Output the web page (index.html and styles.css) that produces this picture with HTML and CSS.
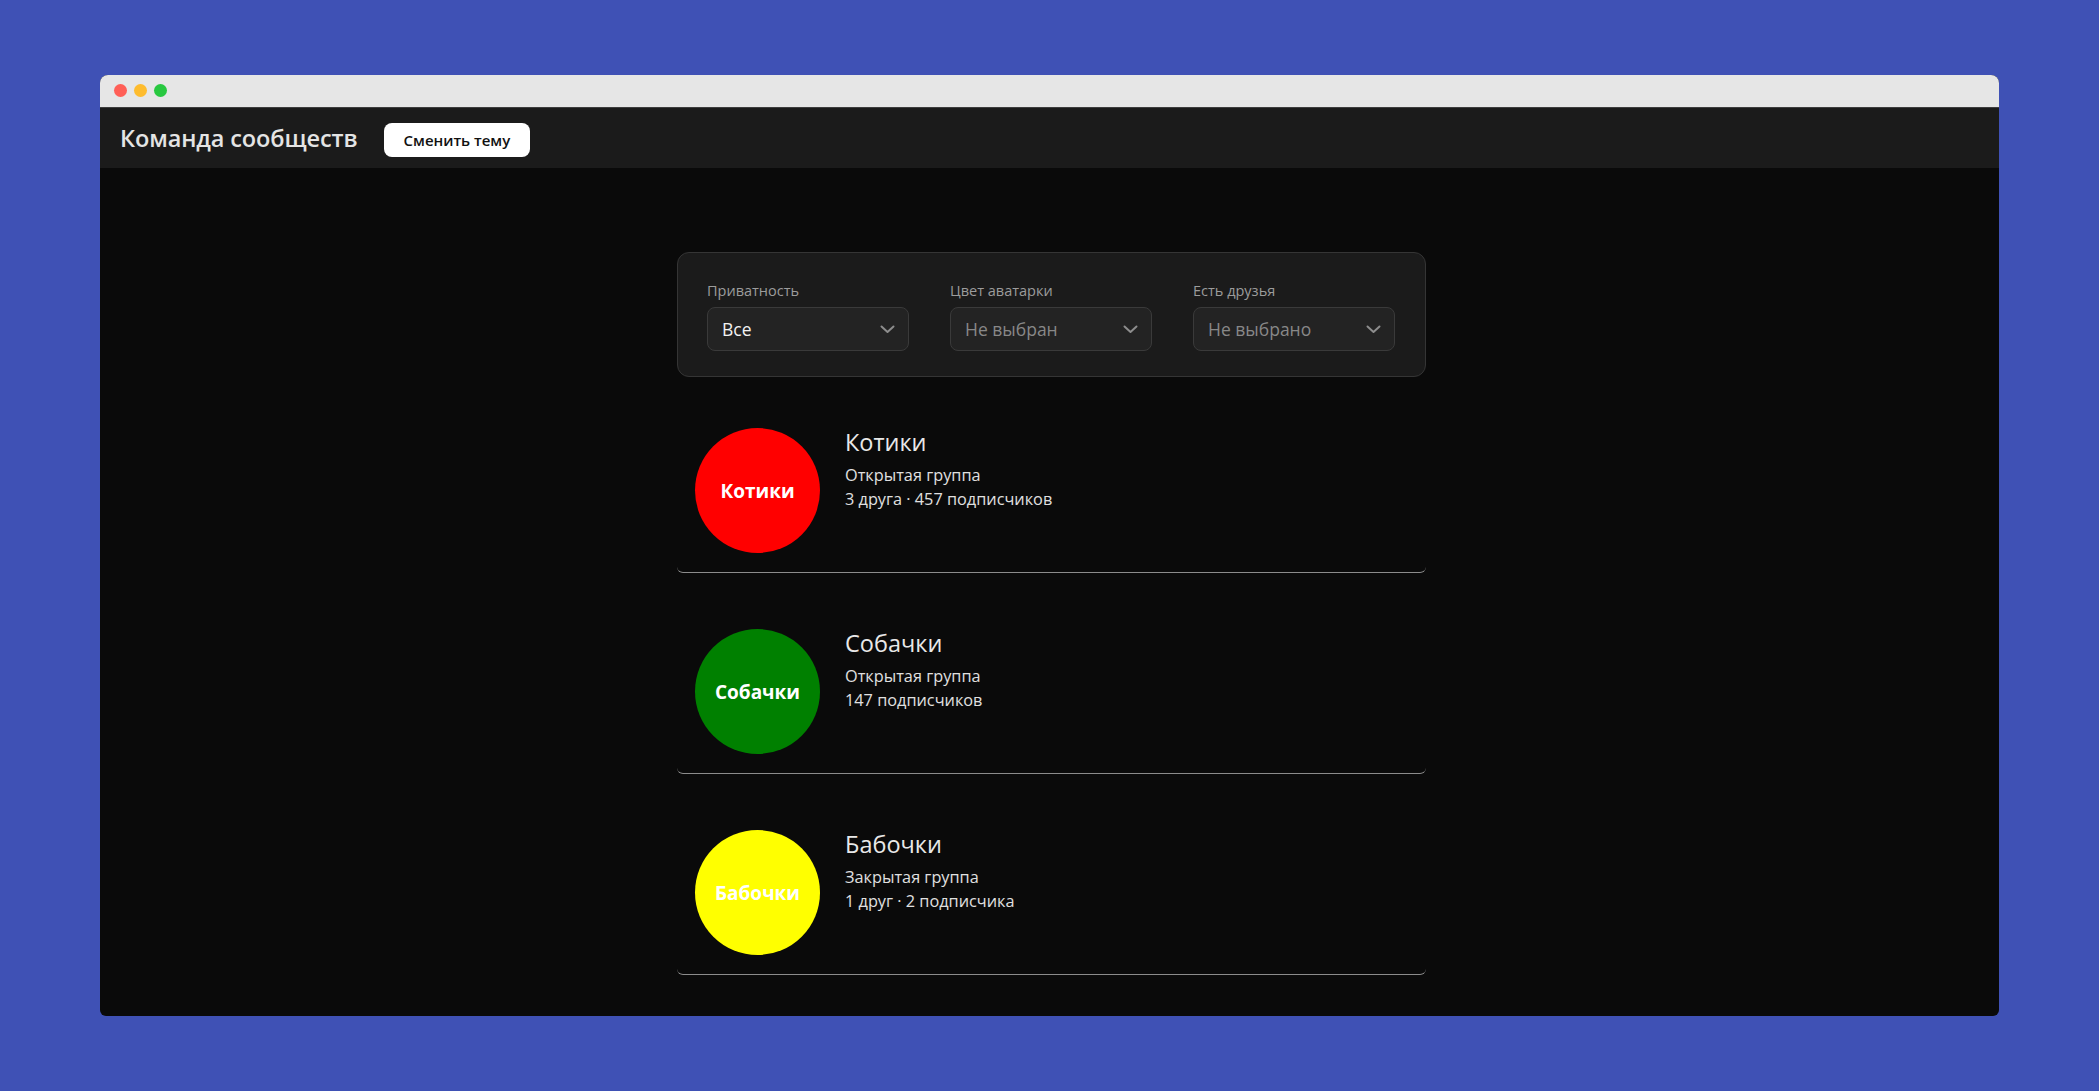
FILE: index.html
```html
<!DOCTYPE html>
<html lang="ru">
<head>
<meta charset="utf-8">
<title>Команда сообществ</title>
<link rel="stylesheet" href="styles.css">
</head>
<body>
<div class="window">
  <div class="titlebar">
    <span class="dot dot-red"></span>
    <span class="dot dot-yellow"></span>
    <span class="dot dot-green"></span>
  </div>
  <header class="header">
    <h1 class="brand">Команда сообществ</h1>
    <button class="theme-btn">Сменить тему</button>
  </header>
  <main class="main">
    <div class="content">
      <section class="filters">
        <div class="field">
          <label class="field-label">Приватность</label>
          <div class="select">
            <span class="select-value">Все</span>
            <svg class="chevron" width="15" height="9" viewBox="0 0 15 9"><path d="M1.5 1.5 L7.5 7 L13.5 1.5" fill="none" stroke="#8d8d8d" stroke-width="2" stroke-linecap="round" stroke-linejoin="round"/></svg>
          </div>
        </div>
        <div class="field">
          <label class="field-label">Цвет аватарки</label>
          <div class="select">
            <span class="select-value placeholder">Не выбран</span>
            <svg class="chevron" width="15" height="9" viewBox="0 0 15 9"><path d="M1.5 1.5 L7.5 7 L13.5 1.5" fill="none" stroke="#8d8d8d" stroke-width="2" stroke-linecap="round" stroke-linejoin="round"/></svg>
          </div>
        </div>
        <div class="field">
          <label class="field-label">Есть друзья</label>
          <div class="select">
            <span class="select-value placeholder">Не выбрано</span>
            <svg class="chevron" width="15" height="9" viewBox="0 0 15 9"><path d="M1.5 1.5 L7.5 7 L13.5 1.5" fill="none" stroke="#8d8d8d" stroke-width="2" stroke-linecap="round" stroke-linejoin="round"/></svg>
          </div>
        </div>
      </section>

      <ul class="groups">
        <li class="group">
          <div class="avatar avatar-red">Котики</div>
          <div class="info">
            <h2 class="group-name">Котики</h2>
            <p class="group-meta">Открытая группа</p>
            <p class="group-meta">3 друга · 457 подписчиков</p>
          </div>
        </li>
        <li class="group">
          <div class="avatar avatar-green">Собачки</div>
          <div class="info">
            <h2 class="group-name">Собачки</h2>
            <p class="group-meta">Открытая группа</p>
            <p class="group-meta">147 подписчиков</p>
          </div>
        </li>
        <li class="group">
          <div class="avatar avatar-yellow">Бабочки</div>
          <div class="info">
            <h2 class="group-name">Бабочки</h2>
            <p class="group-meta">Закрытая группа</p>
            <p class="group-meta">1 друг · 2 подписчика</p>
          </div>
        </li>
      </ul>
    </div>
  </main>
</div>
</body>
</html>
```

FILE: styles.css
```css
* {
  box-sizing: border-box;
}

html, body {
  margin: 0;
  padding: 0;
}

body {
  background: #3f51b5;
  font-family: "Open Sans", "Noto Sans", sans-serif;
  padding: 75px 0 0 100px;
  height: 1091px;
  overflow: hidden;
}

.window {
  width: 1899px;
  height: 941px;
  border-radius: 8px 8px 6px 6px;
  overflow: hidden;
  background: #0a0a0a;
  display: flex;
  flex-direction: column;
}

.titlebar {
  height: 33px;
  flex: none;
  background: #e6e6e6;
  border-bottom: 1px solid #3e3e3e;
  display: flex;
  align-items: center;
  gap: 7px;
  padding-left: 14px;
  padding-bottom: 1px;
}

.dot {
  width: 13px;
  height: 13px;
  border-radius: 50%;
  display: block;
}
.dot-red { background: #ff5f57; }
.dot-yellow { background: #febc2e; }
.dot-green { background: #28c840; }

.header {
  height: 60px;
  flex: none;
  background: #1b1b1b;
  display: flex;
  align-items: center;
  padding: 0 20px;
  gap: 26px;
}

.brand {
  margin: 0;
  font-size: 23.5px;
  font-weight: 600;
  color: #e4e4e4;
  letter-spacing: -0.1px;
}

.theme-btn {
  height: 34px;
  padding: 0 20px;
  border: none;
  border-radius: 8px;
  background: #ffffff;
  color: #111111;
  font-family: "Open Sans", "Noto Sans", sans-serif;
  font-size: 15px;
  font-weight: 600;
  margin-top: 3px;
}

.main {
  flex: 1;
  padding: 84px 0 0 4px;
  display: flex;
  justify-content: center;
}

.content {
  width: 749px;
}

.filters {
  background: #1b1b1b;
  border: 1px solid #353535;
  border-radius: 12px;
  padding: 28px 30px 25px 29px;
  display: grid;
  grid-template-columns: repeat(3, 1fr);
  gap: 41px;
}

.field {
  display: flex;
  flex-direction: column;
  gap: 6px;
}

.field-label {
  font-size: 14.5px;
  line-height: 20px;
  color: #9c9c9c;
}

.select {
  height: 44px;
  background: #232323;
  border: 1px solid #3a3a3a;
  border-radius: 8px;
  display: flex;
  align-items: center;
  justify-content: space-between;
  padding: 0 13px 0 14px;
}

.select-value {
  font-size: 17.5px;
  color: #f2f2f2;
}

.select-value.placeholder {
  color: #888888;
}

.chevron {
  display: block;
  margin-top: 1px;
}

.groups {
  list-style: none;
  margin: 32px 0 0;
  padding: 0;
  display: flex;
  flex-direction: column;
  gap: 37px;
}

.group {
  display: flex;
  align-items: flex-start;
  gap: 25px;
  padding: 19px 18px;
  border-bottom: 1px solid #8c8c8c;
  border-radius: 6px;
}

.avatar {
  width: 125px;
  height: 125px;
  flex: none;
  border-radius: 50%;
  display: flex;
  align-items: center;
  justify-content: center;
  color: #ffffff;
  font-size: 19px;
  font-weight: 700;
}
.avatar-red { background: #ff0000; }
.avatar-green { background: #008000; }
.avatar-yellow { background: #ffff00; }

.group-name {
  margin: 0 0 8px;
  font-size: 23.5px;
  line-height: 28px;
  font-weight: 400;
  color: #e8e8e8;
}

.group-meta {
  margin: 0;
  font-size: 16.3px;
  line-height: 23.5px;
  color: #e0e0e0;
}
```
